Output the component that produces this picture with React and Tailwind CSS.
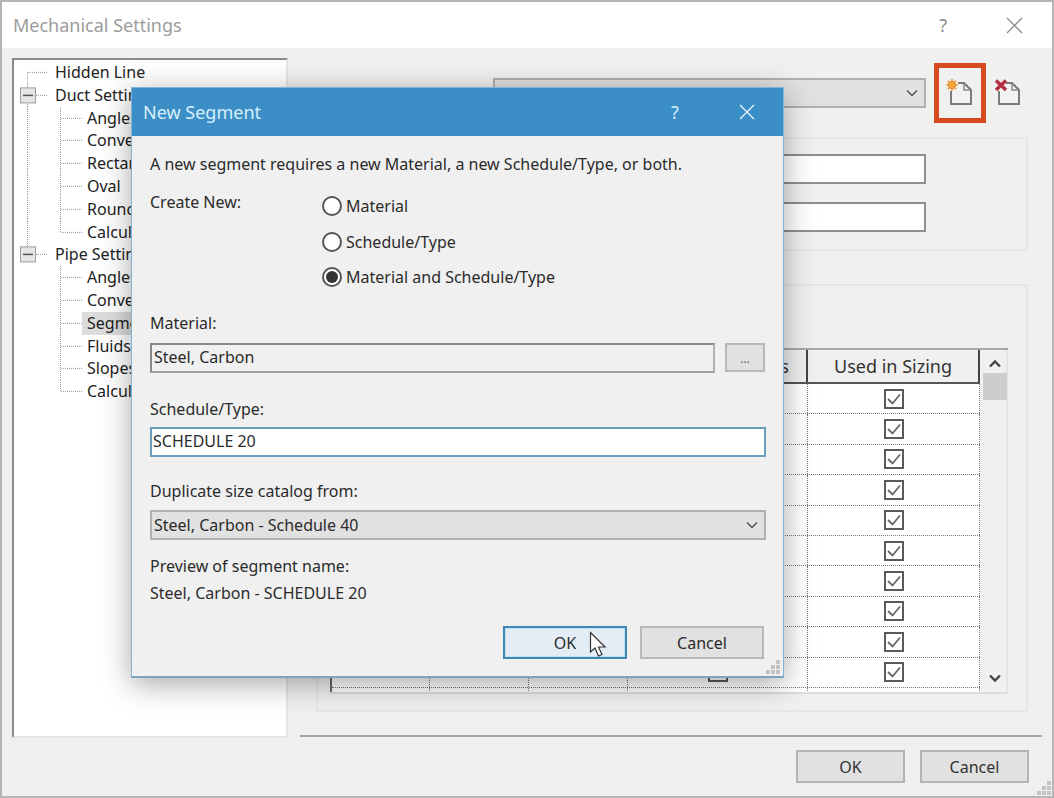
import React from 'react';

const FONT = "font-['Noto_Sans',_'Open_Sans',_sans-serif]";

const Grip = () => (
    <svg width="16" height="16" viewBox="0 0 16 16" fill="#c4c4c4">
        <rect x="11" y="1" width="4" height="4" />
        <rect x="6" y="6" width="4" height="4" />
        <rect x="11" y="6" width="4" height="4" />
        <rect x="1" y="11" width="4" height="4" />
        <rect x="6" y="11" width="4" height="4" />
        <rect x="11" y="11" width="4" height="4" />
    </svg>
);

const Chevron = ({ up = false, className = '', color = '#555', w = 1.5 }) => (
    <svg width="14" height="9" viewBox="0 0 14 9" fill="none" className={className}>
        <path d={up ? 'M2 7.5 L7 2.5 L12 7.5' : 'M2 1.5 L7 6.5 L12 1.5'} stroke={color} strokeWidth={w} />
    </svg>
);

const PageIcon = ({ children }) => (
    <svg width="28" height="28" viewBox="0 0 28 28" fill="none">
        <path d="M7 12 V25 H27 V11 L20 4 H14" stroke="#7b7b7b" strokeWidth="2" fill="#f3f3f3" />
        <path d="M20 4 V11 H27" stroke="#8a8a8a" strokeWidth="1.5" fill="none" />
        {children}
    </svg>
);

// one tree row: connector lines are drawn per row so the rows stay in normal flow
const TreeRow = ({ label, child, expander, trunk, trunkEnd, trunkStart, last, selected }) => {
    const h = 22.8;
    const mid = h / 2;
    const dots = { stroke: '#9a9a9a', strokeWidth: 1, strokeDasharray: '1 1' };
    return (
        <div className="flex items-center h-[22.8px] whitespace-nowrap">
            <svg width={child ? 68 : 36} height={h} className="shrink-0">
                {trunk && <line x1="13.5" x2="13.5" y1={trunkStart ? mid : 0} y2={trunkEnd ? mid : h} {...dots} />}
                {child ? (
                    <>
                        <line x1="46.5" x2="46.5" y1="0" y2={last ? mid : h} {...dots} />
                        <line x1="47" x2="68" y1={mid} y2={mid} {...dots} />
                    </>
                ) : (
                    <line x1="14" x2="34" y1={mid} y2={mid} {...dots} />
                )}
                {expander && (
                    <>
                        <rect x="6.5" y={mid - 7.5} width="15" height="15" fill="#e6e6e6" stroke="#9c9c9c" />
                        <line x1="9" x2="19" y1={mid} y2={mid} stroke="#555" strokeWidth="1.5" />
                    </>
                )}
            </svg>
            <span className={`h-[22.8px] leading-[22px] pl-[5px] pr-2 ${selected ? 'bg-[#dcdcdc]' : ''}`}>{label}</span>
        </div>
    );
};

const Radio = ({ label, checked }) => (
    <div className="flex items-center gap-[4px] h-[20px]">
        <span className="w-[20px] h-[20px] rounded-full border-2 border-[#555] bg-white flex items-center justify-center">
            {checked && <span className="w-[12px] h-[12px] rounded-full bg-[#333]" />}
        </span>
        <span>{label}</span>
    </div>
);

const CheckRow = () => (
    <div className="flex h-[30.4px] shrink-0 border-b border-dotted border-[#777] bg-white">
        <div className="w-[98px] border-r border-dotted border-[#777]" />
        <div className="w-[99px] border-r border-dotted border-[#777]" />
        <div className="w-[99px] border-r border-dotted border-[#777]" />
        {[180, 172].map((w) => (
            <div key={w} className={`${w === 180 ? 'w-[180px]' : 'w-[172px]'} border-r border-dotted border-[#777] flex items-center justify-center`}>
                <span className="w-[20px] h-[20px] border-2 border-[#5a5a5a] bg-white flex items-center justify-center">
                    <svg width="16" height="14" viewBox="0 0 16 14" fill="none">
                        <path d="M2 7 L6.5 11.5 L14 2.5" stroke="#666" strokeWidth="1.8" />
                    </svg>
                </span>
            </div>
        ))}
    </div>
);

const NewSegmentDialog = () => (
    <div className="absolute left-[129px] top-[85px] w-[653px] h-[591px] flex flex-col bg-[#f0f0f0] border border-[#7fb4d6] border-b-2 border-b-[#7ba4bd] shadow-[0_6px_28px_rgba(0,0,0,0.35)] text-[16px] text-[#2b2b2b]">
        <div className="h-[48px] shrink-0 bg-[#3c8fc6] flex items-center pl-[11px] pr-[30px] text-[18px] text-[#d6f0fb]">
            <span className="flex-1">New Segment</span>
            <span className="w-[14px] text-[#d6f0fb]">?</span>
            <svg width="16" height="16" viewBox="0 0 16 16" className="ml-[54px] -mr-[2px]" stroke="#e6f4fb" strokeWidth="1.4">
                <path d="M1 1 L15 15 M15 1 L1 15" />
            </svg>
        </div>

        <div className="flex-1 relative pl-[18px] pr-[18px] pt-[16px] flex flex-col">
            <p className="h-[24px] leading-[24px]">A new segment requires a new Material, a new Schedule/Type, or both.</p>
            <div className="flex mt-[14px]">
                <span className="w-[172px] leading-[24px]">Create New:</span>
                <div className="flex flex-col gap-[15.5px] mt-[6px]">
                    <Radio label="Material" />
                    <Radio label="Schedule/Type" />
                    <Radio label="Material and Schedule/Type" checked />
                </div>
            </div>
            <label className="mt-[24px] h-[24px] leading-[24px]">Material:</label>
            <div className="flex mt-[8px] gap-[10px]">
                <div className="w-[565px] h-[30px] border-2 border-t-[#8a8a8a] border-l-[#8a8a8a] border-r-[#b0b0b0] border-b-[#a0a0a0] pl-[2px] leading-[25px]">Steel, Carbon</div>
                <div className="w-[40px] h-[29px] border-2 border-[#b8b8b8] bg-[#e1e1e1] flex items-center justify-center text-[12px] leading-none pt-[3px] text-[#666]">...</div>
            </div>
            <label className="mt-[24px] h-[24px] leading-[24px]">Schedule/Type:</label>
            <div className="mt-[6px] w-[616px] h-[30px] border-2 border-[#6b9dbd] bg-white pl-[1px] leading-[25px]">SCHEDULE 20</div>
            <label className="mt-[22px] h-[24px] leading-[24px]">Duplicate size catalog from:</label>
            <div className="mt-[7px] w-[616px] h-[30px] border-2 border-[#adb0b5] bg-[#e1e1e1] pl-[2px] pr-[5px] flex items-center justify-between">
                <span>Steel, Carbon - Schedule 40</span>
                <Chevron />
            </div>
            <p className="mt-[14px] h-[24px] leading-[24px]">Preview of segment name:</p>
            <p className="mt-[3px] h-[24px] leading-[24px]">Steel, Carbon - SCHEDULE 20</p>
            <div className="flex justify-end gap-[13px] mt-[21px] pr-[1px]">
                <button className="relative w-[124px] h-[33px] border-2 border-[#3f86b5] bg-[#e4edf5] shadow-[inset_0_0_0_1px_#bfe3f7]">OK</button>
                <button className="w-[124px] h-[33px] border-2 border-[#b8b8b8] bg-[#e1e1e1]">Cancel</button>
            </div>
            {/* pointer over the OK button */}
            <svg width="18" height="27" viewBox="0 0 18 27" className="absolute left-[457px] top-[495px]">
                <path d="M1.5 1.5 V21 L6 17 L9.5 25 L13 23.5 L9.5 16 L16 16 Z" fill="#fff" stroke="#333" strokeWidth="1.2" />
            </svg>
            <div className="absolute right-[2px] bottom-[1px]"><Grip /></div>
        </div>
    </div>
);

const GearDot = () => (
    <g stroke="#ee9a35" strokeWidth="1.6">
        <path d="M8 0 V12 M2 6 H14 M3.8 1.8 L12.2 10.2 M12.2 1.8 L3.8 10.2" />
        <circle cx="8" cy="6" r="3.6" fill="#f6a63c" stroke="#e8842a" strokeWidth="1" />
    </g>
);

export default function App() {
    return (
        <div className={`relative w-[1054px] h-[798px] overflow-hidden flex flex-col bg-[#f0f0f0] border-2 border-[#b5b5b5] text-[16px] text-[#222] ${FONT}`}>
            {/* window title */}
            <div className="h-[46px] shrink-0 bg-white flex items-center pl-[11px] pr-[29px] text-[18px] text-[#9c9c9c]">
                <span className="flex-1">Mechanical Settings</span>
                <span className="text-[#8c8c8c]">?</span>
                <svg width="17" height="17" viewBox="0 0 17 17" className="ml-[59px]" stroke="#8c8c8c" strokeWidth="1.3">
                    <path d="M1 1 L16 16 M16 1 L1 16" />
                </svg>
            </div>

            <div className="flex flex-1 min-h-0">
                {/* settings tree */}
                <div className="ml-[10px] mt-[10px] w-[276px] h-[680px] shrink-0 bg-white border-2 border-t-[#8a8a8a] border-l-[#8a8a8a] border-r-[#e4e4e4] border-b-[#e4e4e4] pt-[1px] overflow-hidden">
                    <TreeRow label="Hidden Line" trunk trunkStart />
                    <TreeRow label="Duct Settings" trunk expander />
                    <TreeRow label="Angles" child trunk />
                    <TreeRow label="Conversion" child trunk />
                    <TreeRow label="Rectangular" child trunk />
                    <TreeRow label="Oval" child trunk />
                    <TreeRow label="Round" child trunk />
                    <TreeRow label="Calculation" child trunk last />
                    <TreeRow label="Pipe Settings" trunk trunkEnd expander />
                    <TreeRow label="Angles" child />
                    <TreeRow label="Conversion" child />
                    <TreeRow label="Segments and Sizes" child selected />
                    <TreeRow label="Fluids" child />
                    <TreeRow label="Slopes" child />
                    <TreeRow label="Calculation" child last />
                </div>

                {/* right side */}
                <div className="flex-1 min-w-0 ml-[12px] flex flex-col">
                    <div className="flex items-center h-[30px] mt-[30px] pl-[193px]">
                        <div className="w-[433px] h-[30px] border-2 border-[#b0b0b0] bg-[#e1e1e1] flex items-center justify-end pr-[5px]">
                            <Chevron />
                        </div>
                        <div className="ml-[18px]"><PageIcon><GearDot /></PageIcon></div>
                        <div className="ml-[20px]"><PageIcon>
                            <path d="M4 1.5 L14 11 M14 1.5 L4 11" stroke="#b2303f" strokeWidth="3.5" />
                        </PageIcon></div>
                    </div>

                    <div className="ml-[193px] mr-[24px] mt-[29px] h-[114px] border-2 border-[#e6e6e6] flex flex-col items-end gap-[18px] pt-[15px] pr-[100px]">
                        <div className="w-[300px] h-[30px] bg-white border-2 border-[#8f8f8f]" />
                        <div className="w-[300px] h-[30px] bg-white border-2 border-[#8f8f8f]" />
                    </div>

                    <div className="ml-[16px] mr-[24px] mt-[33px] h-[428px] border-2 border-[#e6e6e6] pt-[62px] pl-[12px] pr-[18px]">
                        <div className="flex h-[346px] border-t-2 border-b-2 border-t-[#a8a8a8] border-b-[#dcdcdc]">
                            <div className="w-[650px] flex flex-col overflow-hidden border-l-2 border-[#6a6a6a]">
                                <div className="flex h-[34px] shrink-0 border-b-2 border-[#555] text-[18px] text-[#333]">
                                    <div className="w-[98px] border-r-2 border-[#555] flex items-center justify-center">ND</div>
                                    <div className="w-[99px] border-r-2 border-[#555] flex items-center justify-center">ID</div>
                                    <div className="w-[99px] border-r-2 border-[#555] flex items-center justify-center">OD</div>
                                    <div className="w-[180px] border-r-2 border-[#444] flex items-center justify-center">Used in Size Lists</div>
                                    <div className="w-[172px] border-r-2 border-[#444] flex items-center justify-center">Used in Sizing</div>
                                </div>
                                {Array.from({ length: 11 }).map((_, i) => <CheckRow key={i} />)}
                            </div>
                            <div className="w-[28px] border-r-2 border-[#e4e4e4] flex flex-col items-center pt-[9px] pb-[9px] pl-[3px] justify-between">
                                <div className="flex flex-col items-center w-full">
                                    <Chevron up color="#444" w={2.4} />
                                    <div className="w-[24px] h-[27px] mt-[5px] bg-[#cdcdcd]" />
                                </div>
                                <Chevron color="#444" w={2.4} />
                            </div>
                        </div>
                    </div>

                    <div className="mt-[23px] mr-[10px] border-t-2 border-[#a6a6a6] flex justify-end gap-[15px] pt-[13px] pr-[13px]">
                        <button className="w-[109px] h-[33px] border-2 border-[#b4b4b4] bg-[#e1e1e1] text-[#333]">OK</button>
                        <button className="w-[109px] h-[33px] border-2 border-[#b4b4b4] bg-[#e1e1e1] text-[#333]">Cancel</button>
                    </div>
                </div>
            </div>

            <div className="absolute right-0 bottom-0"><Grip /></div>
            {/* highlight annotation around the new-segment button */}
            <div className="absolute left-[932px] top-[61px] w-[52px] h-[60px] border-[5px] border-[#d64a20]" />
            <NewSegmentDialog />
        </div>
    );
}
